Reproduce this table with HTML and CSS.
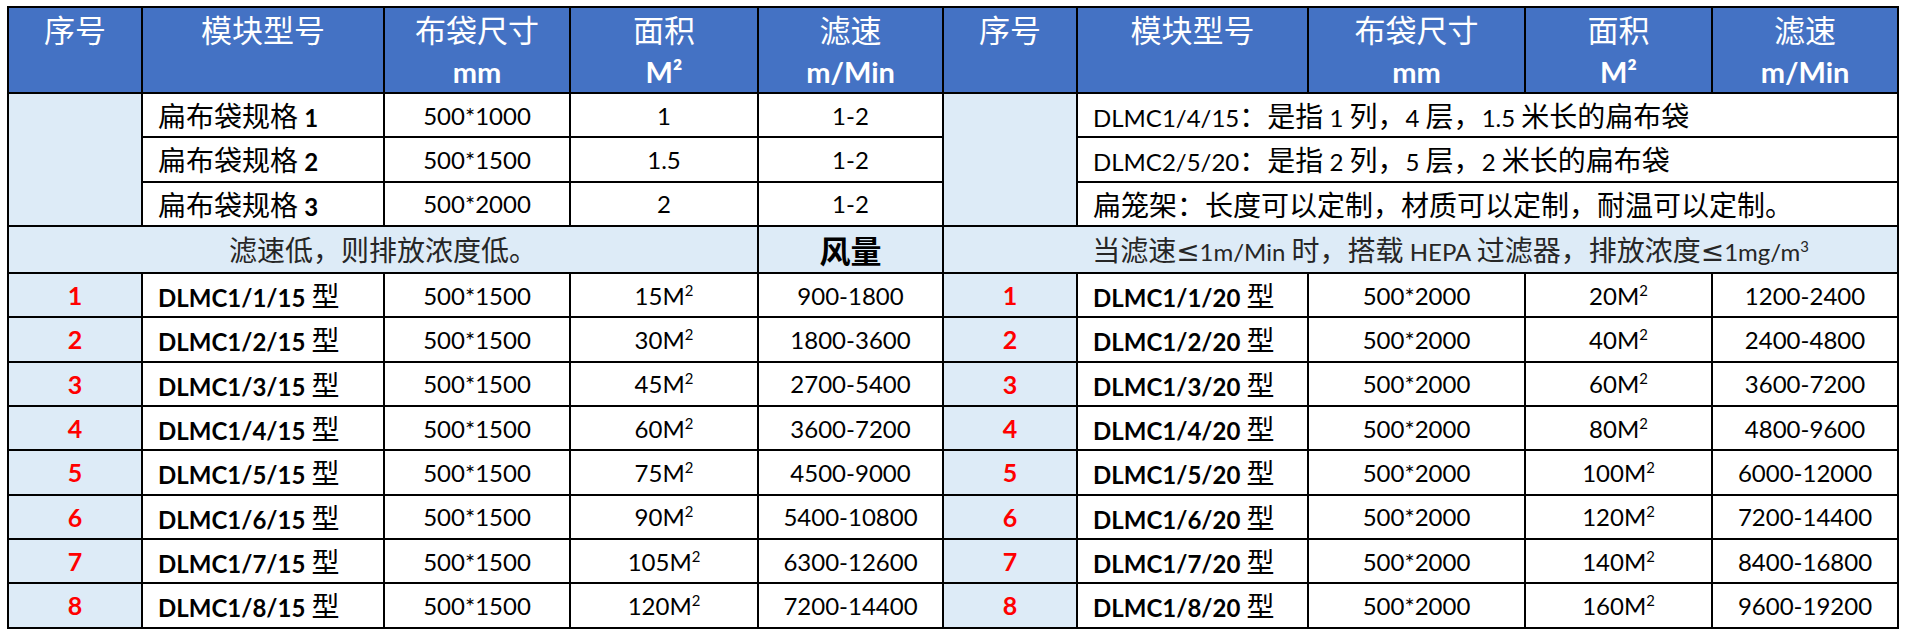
FILE: index.html
```html
<!DOCTYPE html>
<html lang="zh-CN">
<head>
<meta charset="utf-8">
<title>扁布袋模块规格</title>
<link rel="stylesheet" href="styles.css">
</head>
<body>
<table class="spec">
  <tr class="head">
    <th class="w1">序号</th>
    <th class="w2">模块型号</th>
    <th class="w3">布袋尺寸<br><span class="en">mm</span></th>
    <th class="w4">面积<br><span class="en">M²</span></th>
    <th class="w5">滤速<br><span class="en">m/Min</span></th>
    <th class="w6">序号</th>
    <th class="w7">模块型号</th>
    <th class="w8">布袋尺寸<br><span class="en">mm</span></th>
    <th class="w9">面积<br><span class="en">M²</span></th>
    <th class="w10">滤速<br><span class="en">m/Min</span></th>
  </tr>
  <tr>
    <td class="lb" rowspan="3"></td>
    <td class="left"><span class="zh">扁布袋规格</span> <b>1</b></td>
    <td>500*1000</td>
    <td>1</td>
    <td>1-2</td>
    <td class="lb" rowspan="3"></td>
    <td class="left" colspan="4">DLMC1/4/15<span class="zh">：是指</span> 1 <span class="zh">列，</span>4 <span class="zh">层，</span>1.5 <span class="zh">米长的扁布袋</span></td>
  </tr>
  <tr>
    <td class="left"><span class="zh">扁布袋规格</span> <b>2</b></td>
    <td>500*1500</td>
    <td>1.5</td>
    <td>1-2</td>
    <td class="left" colspan="4">DLMC2/5/20<span class="zh">：是指</span> 2 <span class="zh">列，</span>5 <span class="zh">层，</span>2 <span class="zh">米长的扁布袋</span></td>
  </tr>
  <tr>
    <td class="left"><span class="zh">扁布袋规格</span> <b>3</b></td>
    <td>500*2000</td>
    <td>2</td>
    <td>1-2</td>
    <td class="left" colspan="4"><span class="zh">扁笼架：长度可以定制，材质可以定制，耐温可以定制。</span></td>
  </tr>
  <tr>
    <td class="lb note" colspan="4"><span class="zh">滤速低，则排放浓度低。</span></td>
    <td class="lb wind"><span class="zh">风量</span></td>
    <td class="lb note note-r" colspan="5"><span class="zh">当滤速</span><span class="le">≤</span>1m/Min <span class="zh">时，搭载</span> HEPA <span class="zh">过滤器，排放浓度</span><span class="le">≤</span>1mg/m<sup>3</sup></td>
  </tr>
  <tr>
    <td class="lb num">1</td><td class="left"><b>DLMC1/1/15</b> <span class="zh">型</span></td><td>500*1500</td><td>15M<sup>2</sup></td><td>900-1800</td>
    <td class="lb num">1</td><td class="left"><b>DLMC1/1/20</b> <span class="zh">型</span></td><td>500*2000</td><td>20M<sup>2</sup></td><td>1200-2400</td>
  </tr>
  <tr>
    <td class="lb num">2</td><td class="left"><b>DLMC1/2/15</b> <span class="zh">型</span></td><td>500*1500</td><td>30M<sup>2</sup></td><td>1800-3600</td>
    <td class="lb num">2</td><td class="left"><b>DLMC1/2/20</b> <span class="zh">型</span></td><td>500*2000</td><td>40M<sup>2</sup></td><td>2400-4800</td>
  </tr>
  <tr>
    <td class="lb num">3</td><td class="left"><b>DLMC1/3/15</b> <span class="zh">型</span></td><td>500*1500</td><td>45M<sup>2</sup></td><td>2700-5400</td>
    <td class="lb num">3</td><td class="left"><b>DLMC1/3/20</b> <span class="zh">型</span></td><td>500*2000</td><td>60M<sup>2</sup></td><td>3600-7200</td>
  </tr>
  <tr>
    <td class="lb num">4</td><td class="left"><b>DLMC1/4/15</b> <span class="zh">型</span></td><td>500*1500</td><td>60M<sup>2</sup></td><td>3600-7200</td>
    <td class="lb num">4</td><td class="left"><b>DLMC1/4/20</b> <span class="zh">型</span></td><td>500*2000</td><td>80M<sup>2</sup></td><td>4800-9600</td>
  </tr>
  <tr>
    <td class="lb num">5</td><td class="left"><b>DLMC1/5/15</b> <span class="zh">型</span></td><td>500*1500</td><td>75M<sup>2</sup></td><td>4500-9000</td>
    <td class="lb num">5</td><td class="left"><b>DLMC1/5/20</b> <span class="zh">型</span></td><td>500*2000</td><td>100M<sup>2</sup></td><td>6000-12000</td>
  </tr>
  <tr>
    <td class="lb num">6</td><td class="left"><b>DLMC1/6/15</b> <span class="zh">型</span></td><td>500*1500</td><td>90M<sup>2</sup></td><td>5400-10800</td>
    <td class="lb num">6</td><td class="left"><b>DLMC1/6/20</b> <span class="zh">型</span></td><td>500*2000</td><td>120M<sup>2</sup></td><td>7200-14400</td>
  </tr>
  <tr>
    <td class="lb num">7</td><td class="left"><b>DLMC1/7/15</b> <span class="zh">型</span></td><td>500*1500</td><td>105M<sup>2</sup></td><td>6300-12600</td>
    <td class="lb num">7</td><td class="left"><b>DLMC1/7/20</b> <span class="zh">型</span></td><td>500*2000</td><td>140M<sup>2</sup></td><td>8400-16800</td>
  </tr>
  <tr>
    <td class="lb num">8</td><td class="left"><b>DLMC1/8/15</b> <span class="zh">型</span></td><td>500*1500</td><td>120M<sup>2</sup></td><td>7200-14400</td>
    <td class="lb num">8</td><td class="left"><b>DLMC1/8/20</b> <span class="zh">型</span></td><td>500*2000</td><td>160M<sup>2</sup></td><td>9600-19200</td>
  </tr>
</table>
</body>
</html>
```

FILE: styles.css
```css
html, body {
  background: #ffffff;
}
body {
  margin: 6px 0 0 7px;
  font-family: Lato, "Noto Sans CJK SC", sans-serif;
  color: #000;
}
.spec {
  border-collapse: separate;
  border-spacing: 0;
  table-layout: fixed;
  width: 1892px;
  border-top: 2px solid #000;
  border-left: 2px solid #000;
}
.spec th,
.spec td {
  box-sizing: border-box;
  border-right: 2px solid #000;
  border-bottom: 2px solid #000;
  padding: 0;
  text-align: center;
  vertical-align: middle;
  white-space: nowrap;
  font-size: 24px;
  font-weight: 400;
}
.w1 { width: 134px; }
.w2 { width: 242px; }
.w3 { width: 186px; }
.w4 { width: 188px; }
.w5 { width: 185px; }
.w6 { width: 134px; }
.w7 { width: 231px; }
.w8 { width: 217px; }
.w9 { width: 187px; }
.w10 { width: 186px; }

.spec tr {
  height: 44.33px;
}
.spec tr.head {
  height: 85px;
}
.spec .head th {
  background: #4472c4;
  color: #ffffff;
  vertical-align: top;
  font-family: "Noto Sans CJK SC", sans-serif;
  font-size: 31px;
  line-height: 41px;
  font-weight: 400;
}
.head .en {
  font-family: Lato, sans-serif;
  font-weight: 700;
  font-size: 29px;
}
.spec td {
  background: #ffffff;
}
.spec td.lb {
  background: #ddebf7;
}
.spec td.left {
  text-align: left;
  padding-left: 15px;
}
.zh {
  font-family: "Noto Sans CJK SC", sans-serif;
  font-size: 28px;
  font-weight: 400;
}
.spec .le {
  font-family: "Noto Sans", "DejaVu Sans", sans-serif;
  font-size: 28px;
  line-height: 1;
}
.spec b {
  font-weight: 700;
}
.spec td.num {
  color: #ff0000;
  font-weight: 700;
  font-size: 25px;
}
.spec td.note {
  color: #262626;
}
.spec td.note-r {
  padding-left: 60px;
}
.spec td.wind .zh {
  font-size: 31px;
  font-weight: 700;
}
sup {
  font-size: 0.62em;
  line-height: 0;
  vertical-align: 0.6em;
}
```
